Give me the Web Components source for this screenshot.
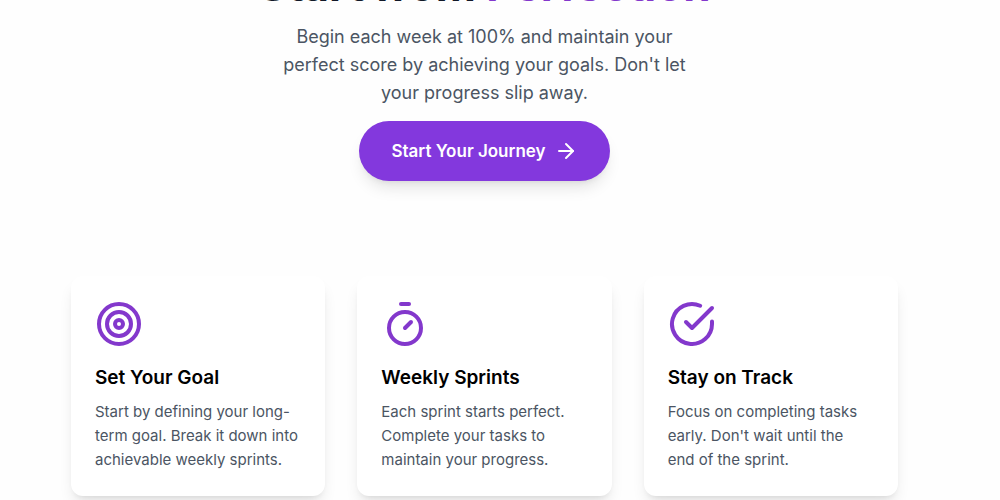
<!DOCTYPE html>
<html lang="en">
<head>
<meta charset="utf-8">
<meta name="viewport" content="width=device-width, initial-scale=1">
<title>Start from Perfection</title>
<style>
body {
    margin: 0;
    background: #fefefe;
    color: #000;
    font-family: Inter, "Liberation Sans", sans-serif;
}
</style>
</head>
<body>
<landing-page>
    <hero-section slot="hero" action="Start Your Journey">
        <span slot="title">Start from</span>
        <span slot="accent">Perfection</span>
        Begin each week at 100% and maintain your perfect score by achieving your goals. Don't let your progress slip away.
    </hero-section>
    <feature-card icon="target" heading="Set Your Goal">Start by defining your long-term goal. Break it down into achievable weekly sprints.</feature-card>
    <feature-card icon="timer" heading="Weekly Sprints">Each sprint starts perfect. Complete your tasks to maintain your progress.</feature-card>
    <feature-card icon="check" heading="Stay on Track">Focus on completing tasks early. Don't wait until the end of the sprint.</feature-card>
</landing-page>

<script>
const icons = {
    target: `<circle cx="12" cy="12" r="10"/><circle cx="12" cy="12" r="6"/><circle cx="12" cy="12" r="2"/>`,
    timer: `<line x1="10" x2="14" y1="2" y2="2"/><line x1="12" x2="15" y1="14" y2="11"/><circle cx="12" cy="14" r="8"/>`,
    check: `<path d="M22 10.8V12a10 10 0 1 1-5.93-9.14"/><path d="m9 11 3 3L22 4"/>`,
    arrow: `<path d="M5 12h14"/><path d="m12 5 7 7-7 7"/>`
}

class LineIcon extends HTMLElement {
    constructor(){
        super();
        this.attachShadow({ mode: "open" })
    }
    connectedCallback(){
        this.shadowRoot.innerHTML = `
            <style>
                :host{
                    display: block;
                    flex: none;
                    width: 48px;
                    height: 48px;
                }
                svg{
                    display: block;
                    width: 100%;
                    height: 100%;
                }
            </style>
            <svg viewBox="0 0 24 24" fill="none" stroke="currentColor" stroke-width="2"
                stroke-linecap="round" stroke-linejoin="round" aria-hidden="true">
                ${icons[this.getAttribute("name")]}
            </svg>
        `
    }
}
window.customElements.define('line-icon', LineIcon)

class HeroSection extends HTMLElement {
    constructor(){
        super();
        this.attachShadow({ mode: "open" })
    }
    connectedCallback(){
        this.shadowRoot.innerHTML = `
            <style>
                :host{
                    display: flex;
                    flex-direction: column;
                    align-items: center;
                    gap: 14px;
                    text-align: center;
                }
                h1{
                    margin: 0;
                    font-size: 44px;
                    line-height: 48px;
                    font-weight: 700;
                    color: #111827;
                }
                .accent{
                    color: #8338cc;
                }
                p{
                    margin: 0;
                    max-width: 416px;
                    font-size: 18px;
                    line-height: 28px;
                    color: #4b5563;
                }
                button{
                    display: flex;
                    align-items: center;
                    gap: 8px;
                    border: 0;
                    border-radius: 30px;
                    padding: 16px 32px;
                    background: #8338dd;
                    color: #fff;
                    font: 600 17px/28px Inter, "Liberation Sans", sans-serif;
                    box-shadow: 0 10px 15px -3px rgba(0,0,0,.1), 0 4px 6px -4px rgba(0,0,0,.1);
                    cursor: pointer;
                }
                button:hover{
                    background: #7e22ce;
                }
                line-icon{
                    width: 24px;
                    height: 24px;
                }
            </style>
            <h1><slot name="title"></slot> <span class="accent"><slot name="accent"></slot></span></h1>
            <p><slot></slot></p>
            <button type="button">${this.getAttribute("action")}<line-icon name="arrow"></line-icon></button>
        `
    }
}
window.customElements.define('hero-section', HeroSection)

class FeatureCard extends HTMLElement {
    constructor(){
        super();
        this.attachShadow({ mode: "open" })
    }
    connectedCallback(){
        this.shadowRoot.innerHTML = `
            <style>
                :host{
                    display: block;
                    box-sizing: border-box;
                    padding: 24px;
                    border-radius: 12px;
                    background: #fff;
                    box-shadow: 0 10px 15px -3px rgba(0,0,0,.1), 0 4px 6px -4px rgba(0,0,0,.1);
                }
                line-icon{
                    color: #8338cc;
                }
                h3{
                    margin: 16px 0 8px;
                    font-size: 19px;
                    line-height: 28px;
                    font-weight: 600;
                }
                p{
                    margin: 0;
                    font-size: 15px;
                    line-height: 24px;
                    color: #4b5563;
                }
            </style>
            <line-icon name="${this.getAttribute("icon")}"></line-icon>
            <h3>${this.getAttribute("heading")}</h3>
            <p><slot></slot></p>
        `
    }
}
window.customElements.define('feature-card', FeatureCard)

class LandingPage extends HTMLElement {
    constructor(){
        super();
        this.attachShadow({ mode: "open" })
        this.shadowRoot.innerHTML = `
            <style>
                :host{
                    display: block;
                    overflow: hidden;
                    padding: 0 102px 0 71px;
                }
                main{
                    margin-top: -39px;
                    padding-bottom: 4px;
                }
                .features{
                    display: grid;
                    grid-template-columns: repeat(3, 1fr);
                    gap: 32px;
                    margin-top: 95px;
                }
            </style>
            <main>
                <slot name="hero"></slot>
                <div class="features"><slot></slot></div>
            </main>
        `
    }
}
window.customElements.define('landing-page', LandingPage)
</script>
</body>
</html>
